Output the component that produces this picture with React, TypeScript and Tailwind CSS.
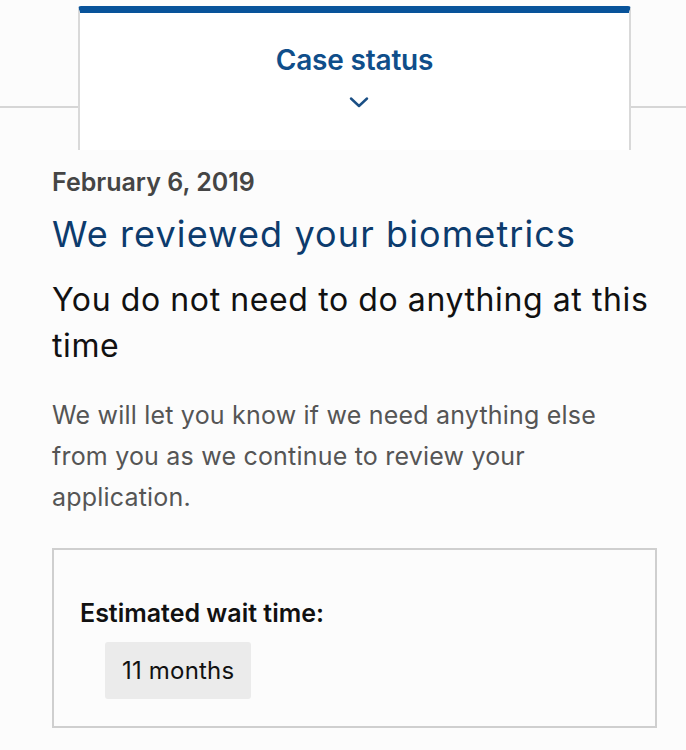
export default function App() {
  return (
    <div className="w-[686px] h-[750px] bg-[#fcfcfc] overflow-hidden font-['Inter',sans-serif]">
      {/* tab header */}
      <div className="flex items-start pt-[6px]">
        <div className="w-[78px] mt-[100px] border-t-2 border-[#d6d6d6]" />
        <div className="w-[553px] h-[144px] bg-white rounded-t-[3px] border-t-[7px] border-[#08539a] border-x-2 border-x-[#d9d9d9] flex flex-col items-center">
          <div className="mt-[30px] text-[28px] leading-[34px] text-[#0f4e8a] font-semibold tracking-[-0.2px]">Case status</div>
          <svg className="mt-[20px] ml-[8px]" width="20" height="11" viewBox="0 0 20 11" fill="none">
            <path d="M2 1.5 L10 9 L18 1.5" stroke="#1a4f85" strokeWidth="2.4" strokeLinecap="round" strokeLinejoin="round" />
          </svg>
        </div>
        <div className="flex-1 mt-[100px] border-t-2 border-[#d6d6d6]" />
      </div>

      <div className="pl-[52px] pr-[29px] pt-[16px]">
        <div className="text-[25px] leading-[32px] font-semibold text-[#454545]">February 6, 2019</div>
        <div className="mt-[14px] text-[36px] leading-[44px] tracking-[1.1px] text-[#0c3b6d]">We reviewed your biometrics</div>
        <div className="mt-[21px] text-[32px] leading-[46px] tracking-[0.6px] text-[#111]">You do not need to do anything at this time</div>
        <div className="mt-[26px] text-[25px] leading-[41px] tracking-[0.2px] text-[#555] pr-[40px]">
          We will let you know if we need anything else from you as we continue to review your application.
        </div>
        <div className="mt-[30px] h-[180px] border-2 border-[#cfcfcf] pl-[26px] pt-[48px]">
          <div className="text-[25px] leading-[30px] font-semibold text-[#111]">Estimated wait time:</div>
          <div className="mt-[14px] ml-[25px] inline-flex items-center px-[17px] h-[57px] bg-[#ebebeb] rounded-[3px] text-[24px] tracking-[0.2px] text-[#111]">
            11 months
          </div>
        </div>
      </div>
    </div>
  );
}
